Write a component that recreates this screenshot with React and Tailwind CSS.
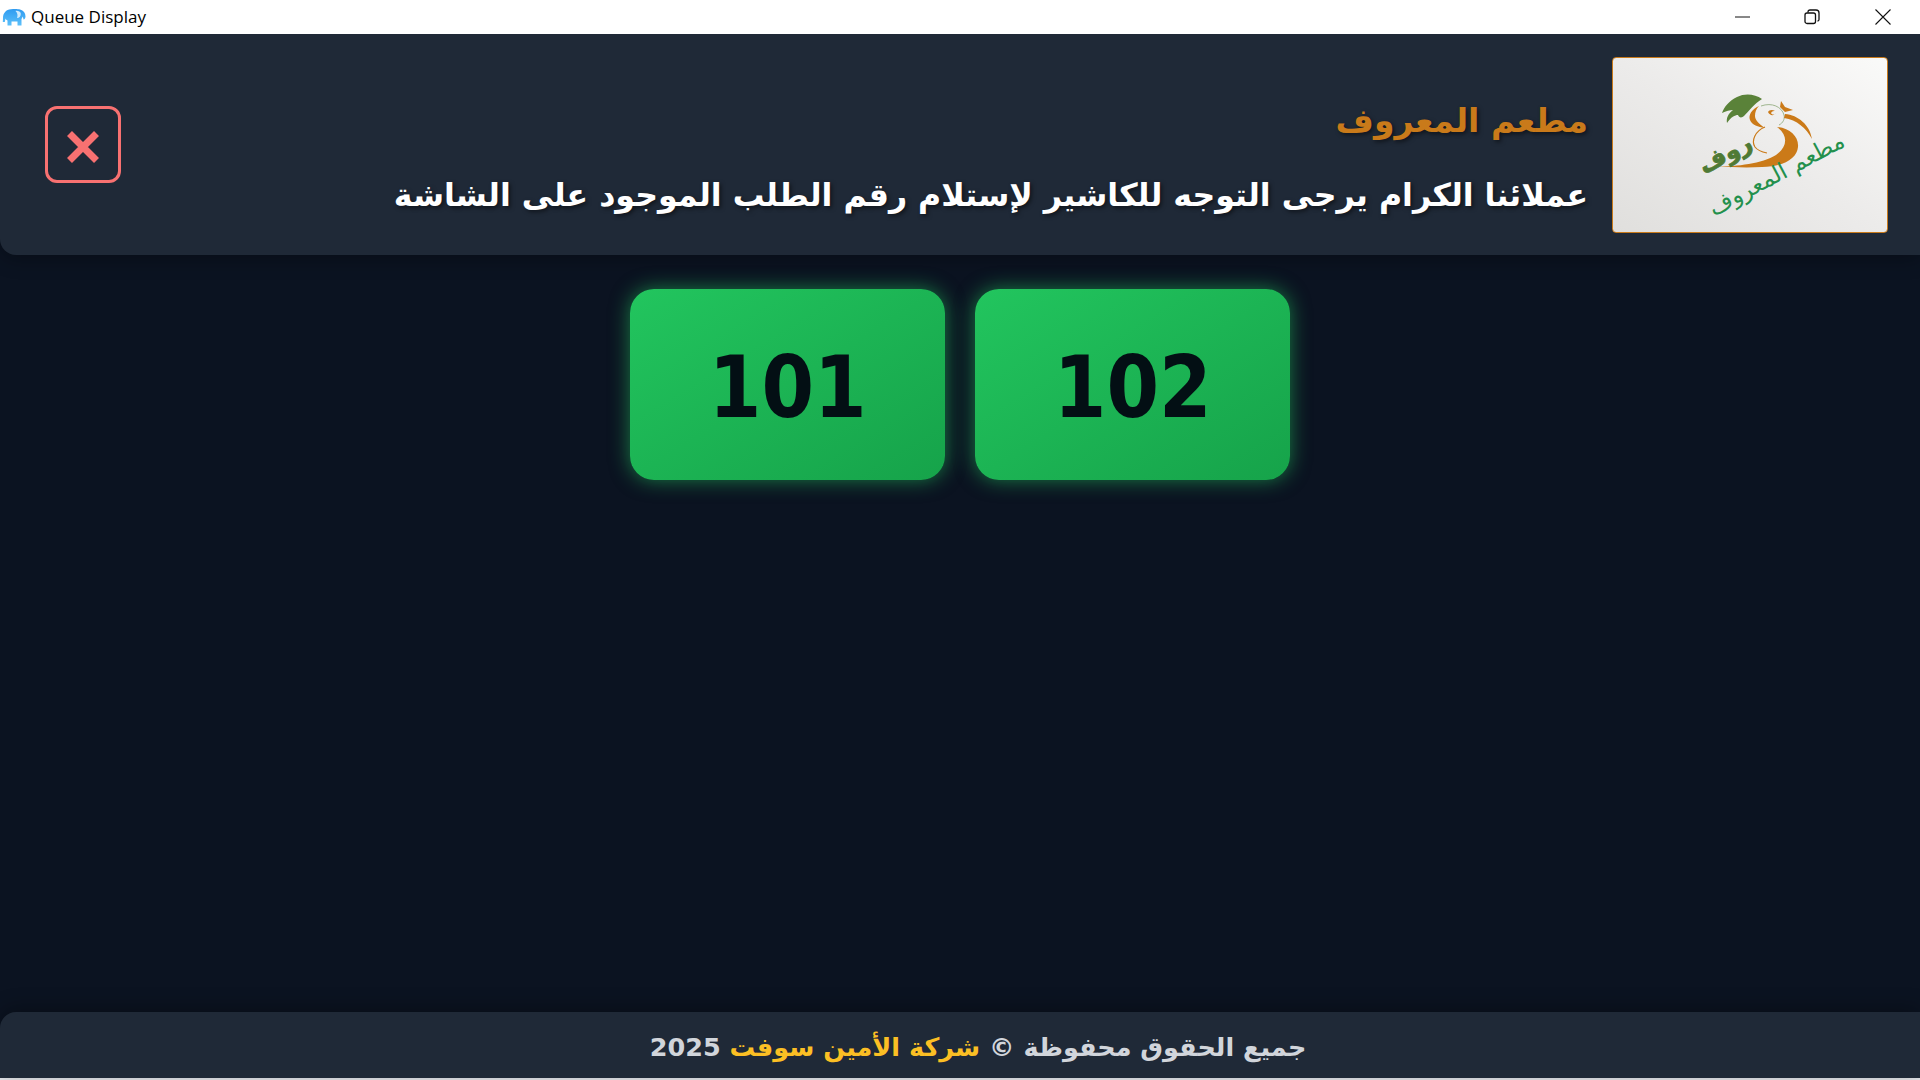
import React from "react";

const tickets = ["101", "102"];

// app icon in the title bar
function AppIcon() {
  return (
    <svg width="24" height="18" viewBox="0 0 24 18" className="shrink-0">
      <defs>
        <linearGradient id="eleph" x1="0" y1="0" x2="0" y2="1">
          <stop offset="0" stopColor="#2f9bf0" />
          <stop offset="1" stopColor="#5cc0fa" />
        </linearGradient>
      </defs>
      <path
        d="M1 10C1 5 4 1.500 9 1.200C12 .8 16 .8 18 1.500C21.500 2.500 23.500 5 23.500 8.500C23.500 10 22.800 11.500 21.500 11.500L20.800 8.500L19.500 11L19.500 17.500L15.500 17.500L15.500 13.500L9.500 13.500L9.500 17.500L5.500 17.500L5.500 12.500C4.500 12 3.800 11.500 3.500 10.500L2.800 14L.8 14Z"
        fill="url(#eleph)"
      />
      <path d="M13.500 3C15.500 4.500 16 7.500 15 10C17.500 10 19 8 18.800 5.500C18.600 3.500 15.500 2.500 13.500 3Z" fill="#cfeafd" />
    </svg>
  );
}

function TitleBar() {
  return (
    <div className="relative z-20 h-[34px] shrink-0 bg-white flex items-center justify-between">
      <div className="flex items-center pl-[2px] gap-[5px]">
        <AppIcon />
        <span className="text-[17px] text-black font-['Open_Sans',sans-serif]">Queue Display</span>
      </div>
      <div className="flex items-center h-full text-[#111]">
        <div className="w-[69px] h-full flex items-center justify-center">
          <svg width="16" height="2" viewBox="0 0 16 2">
            <path d="M0 1H15" stroke="currentColor" strokeWidth="1" />
          </svg>
        </div>
        <div className="w-[69px] h-full flex items-center justify-center">
          <svg width="16" height="16" viewBox="0 0 16 16" fill="none" stroke="currentColor" strokeWidth="1.300">
            <rect x="1" y="4" width="10.500" height="10.500" rx="2" />
            <path d="M4 3.500V3C4 1.800 4.800 1 6 1H12C13.800 1 15 2.200 15 4V10.500C15 11.500 14.500 12 13.500 12" />
          </svg>
        </div>
        <div className="w-[74px] h-full flex items-center justify-center">
          <svg width="16" height="16" viewBox="0 0 16 16" fill="none" stroke="currentColor" strokeWidth="1.100">
            <path d="M.5 .5L15.500 15.500M15.500 .5L.5 15.500" />
          </svg>
        </div>
      </div>
    </div>
  );
}

// restaurant logo on paper
function Logo() {
  return (
    <div className="w-[276px] h-[176px] shrink-0 rounded-[4px] border border-[#c97a1a] overflow-hidden bg-gradient-to-bl from-[#fafaf9] via-[#ecebea] to-[#e0dfdd]">
      <svg width="274" height="174" viewBox="1 1 274 174">
        <path d="M150 42C143 37 133 36 125 40C117 44 112 50 110 56C114 54 118 53 121 53C116 57 114 61 115 66C119 60 123 58 126 58C127 61 130 61 132 59C137 54 142 47 150 42Z" fill="#5a8239" />
        <path d="M147 49C140 52 136 58 138 63C140 68 146 70 153 71C147 67 143 63 143 59C143 55 144 52 147 49Z" fill="#cb7a18" />
        <path d="M149 49C160 45 170 50 172 58C173 62 171 66 167 68" fill="none" stroke="#9fb58f" strokeWidth="1" />
        <path d="M156 55C158 59 162 59 164 56C163 58 160 58 159 56C160 54 162 54 163 54C160 52 157 53 156 55Z" fill="#cb7a18" />
        <path d="M168 50L169 44L173 50L181 53L173 55Z" fill="#cb7a18" />
        <path d="M173 57C186 58 198 68 200 82C194 71 185 63 172 61Z" fill="#cb7a18" />
        <path d="M165 70C178 71 187 80 186 90C185 102 170 110 150 110C135 111 118 110 105 110C125 109 150 107 164 98C175 90 177 79 165 70Z" fill="#cb7a18" />
        <path d="M153 70C143 74 139 84 143 90C146 94 150 95 155 96" fill="none" stroke="#cb7a18" strokeWidth="1.200" />
        <text x="0" y="0" transform="translate(117 104) rotate(-28)" textAnchor="middle" fontSize="24" fontWeight="700" fill="#4f7a34" stroke="#4f7a34" strokeWidth="0.800" fontFamily="'DejaVu Sans',sans-serif">روف</text>
        <text x="0" y="0" transform="translate(168 124) rotate(-28)" textAnchor="middle" fontSize="23" fill="#23904c" fontFamily="'DejaVu Sans',sans-serif">مطعم المعروف</text>
      </svg>
    </div>
  );
}

function Header() {
  return (
    <header className="relative z-10 h-[221px] shrink-0 bg-[#1f2937] rounded-bl-[16px] shadow-[0_4px_20px_rgba(0,0,0,0.3)] flex items-center justify-between pl-[45px] pr-[32px]">
      <button className="w-[76px] h-[77px] rounded-[12px] border-[3px] border-[#f87171] flex items-center justify-center">
        <svg width="34" height="34" viewBox="0 0 34 34" className="mt-[5px]">
          <path d="M3.500 3.500L30.500 30.500M30.500 3.500L3.500 30.500" stroke="#f87171" strokeWidth="7" />
        </svg>
      </button>
      <div className="flex items-center gap-[24px]">
        <div dir="rtl" className="flex flex-col items-start gap-[26px] pt-[27px] font-['DejaVu_Sans',sans-serif] font-bold [text-shadow:2px_2px_4px_rgba(0,0,0,0.5)]">
          <h1 className="text-[33px] leading-[48px] text-[#c97a1a]">مطعم المعروف</h1>
          <p className="text-[31.6px] leading-[48px] text-white">عملائنا الكرام يرجى التوجه للكاشير لإستلام رقم الطلب الموجود على الشاشة</p>
        </div>
        <Logo />
      </div>
    </header>
  );
}

export default function App() {
  return (
    <div className="h-screen flex flex-col bg-[#0b1321] overflow-hidden">
      <TitleBar />
      <Header />
      <main className="flex-1 flex justify-center items-start gap-[30px] pt-[34px]">
        {tickets.map((t) => (
          <div
            key={t}
            className="w-[315px] h-[191px] rounded-[24px] bg-gradient-to-br from-[#22c55e] to-[#16a34a] shadow-[0_0_20px_rgba(34,197,94,0.6)] flex items-center justify-center pt-[6px] text-[85px] font-bold text-[#030f14] font-['DejaVu_Sans',sans-serif]"
          >
            <span className="scale-x-[0.89]">{t}</span>
          </div>
        ))}
      </main>
      <footer dir="rtl" className="relative z-10 h-[66px] shrink-0 bg-[#1f2937] rounded-tl-[16px] shadow-[0_-4px_20px_rgba(0,0,0,0.3)] flex items-center justify-center pt-[4px] pl-[36px] text-[25.5px] font-bold text-[#d1d5db] font-['DejaVu_Sans',sans-serif]">
        <span>
          جميع الحقوق محفوظة © <span className="text-[#fbbf24]">شركة الأمين سوفت</span> 2025
        </span>
      </footer>
      <div className="h-[2px] shrink-0 bg-[#e5e7eb]" />
    </div>
  );
}
